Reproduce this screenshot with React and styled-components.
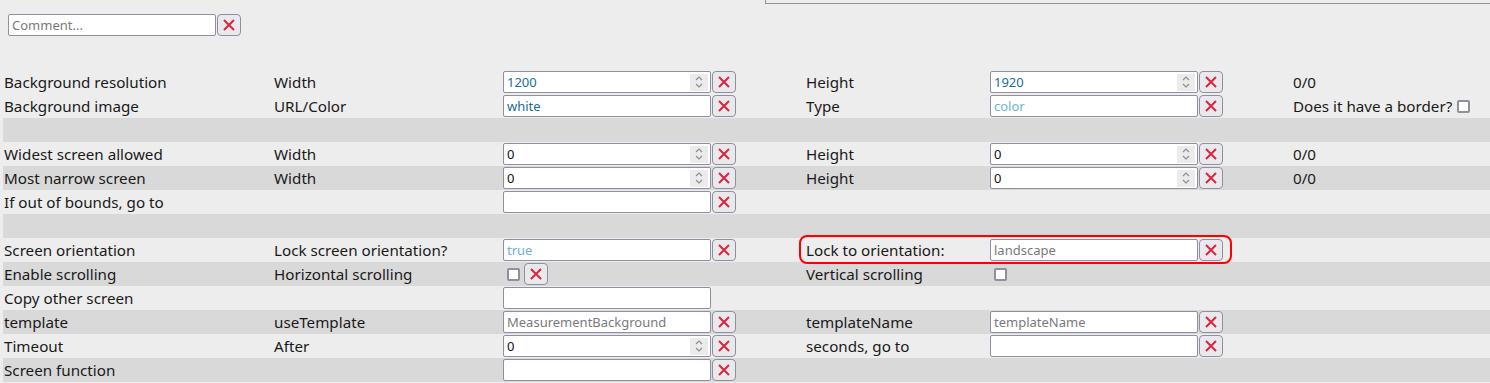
import React from "react"
import styled, { createGlobalStyle } from "styled-components"

const GlobalStyle = createGlobalStyle`
    html, body {
        margin: 0;
        padding: 0;
        background-color: #ededed;
        overflow: hidden;
    }
    body {
        font-family: "Noto Sans", "DejaVu Sans", sans-serif;
        color: #1a1a1a;
    }
`

const rows = [
    { label: "Background resolution", sub: "Width", a: { kind: "number", value: "1200", tone: "value" }, l2: "Height", b: { kind: "number", value: "1920", tone: "value" }, extra: "0/0" },
    { label: "Background image", sub: "URL/Color", a: { kind: "text", value: "white", tone: "value" }, l2: "Type", b: { kind: "text", placeholder: "color", tone: "hint" }, extra: "Does it have a border?", extraCheck: true },
    { empty: true, shade: true },
    { label: "Widest screen allowed", sub: "Width", a: { kind: "number", value: "0" }, l2: "Height", b: { kind: "number", value: "0" }, extra: "0/0" },
    { label: "Most narrow screen", sub: "Width", a: { kind: "number", value: "0" }, l2: "Height", b: { kind: "number", value: "0" }, extra: "0/0", shade: true },
    { label: "If out of bounds, go to", a: { kind: "text", value: "" } },
    { empty: true, shade: true },
    { label: "Screen orientation", sub: "Lock screen orientation?", a: { kind: "text", placeholder: "true", tone: "hint" }, l2: "Lock to orientation:", b: { kind: "text", placeholder: "landscape" }, highlight: true },
    { label: "Enable scrolling", sub: "Horizontal scrolling", a: { kind: "check" }, l2: "Vertical scrolling", b: { kind: "check", noClear: true }, shade: true },
    { label: "Copy other screen", a: { kind: "text", value: "", noClear: true } },
    { label: "template", sub: "useTemplate", a: { kind: "text", placeholder: "MeasurementBackground" }, l2: "templateName", b: { kind: "text", placeholder: "templateName" }, shade: true },
    { label: "Timeout", sub: "After", a: { kind: "number", value: "0" }, l2: "seconds, go to", b: { kind: "text", value: "" } },
    { label: "Screen function", a: { kind: "text", value: "" }, shade: true },
]

function ClearIcon() {
    return (
        <svg width="14" height="14" viewBox="0 0 14 14">
            <path d="M2 2 L12 12 M12 2 L2 12" stroke="#e0233d" strokeWidth="2" fill="none" />
        </svg>
    )
}

function SpinIcon() {
    return (
        <svg width="10" height="14" viewBox="0 0 10 14">
            <path d="M2 5 L5 2 L8 5 M2 9 L5 12 L8 9" stroke="#8c8c8c" strokeWidth="1.1" fill="none" />
        </svg>
    )
}

function Control({ field }) {
    if (!field) return null
    if (field.kind === "check") {
        return (
            <Group>
                <CheckBox />
                {!field.noClear && <ClearButton><ClearIcon /></ClearButton>}
            </Group>
        )
    }
    return (
        <Group>
            <Field>
                <Input tone={field.tone} defaultValue={field.value} placeholder={field.placeholder} />
                {field.kind === "number" && <Spinner><SpinIcon /></Spinner>}
            </Field>
            {!field.noClear && <ClearButton><ClearIcon /></ClearButton>}
        </Group>
    )
}

function App() {
    return (
        <Page>
            <GlobalStyle />
            <TopPreview />
            <CommentRow>
                <Field>
                    <Input placeholder="Comment..." />
                </Field>
                <ClearButton><ClearIcon /></ClearButton>
            </CommentRow>
            <Table>
                {rows.map((row, i) => (
                    <Row key={i} shade={row.shade}>
                        {!row.empty && (
                            <>
                                <Cell>{row.label}</Cell>
                                <Cell>{row.sub}</Cell>
                                <Cell><Control field={row.a} /></Cell>
                                {row.highlight ? (
                                    <Highlight>
                                        <Cell>{row.l2}</Cell>
                                        <Cell><Control field={row.b} /></Cell>
                                    </Highlight>
                                ) : (
                                    <>
                                        <Cell>{row.l2}</Cell>
                                        <Cell><Control field={row.b} /></Cell>
                                    </>
                                )}
                                <Cell>
                                    {row.extra}
                                    {row.extraCheck && <CheckBox style={{ marginLeft: 5 }} />}
                                </Cell>
                            </>
                        )}
                    </Row>
                ))}
            </Table>
        </Page>
    )
} export default App

const Page = styled.div`
    width: 1490px;
    height: 383px;
    overflow: hidden;
`

const TopPreview = styled.div`
    margin-left: 765px;
    width: 800px;
    height: 3px;
    border-left: 1px solid #8f8f9d;
    border-bottom: 1px solid #8f8f9d;
`

const CommentRow = styled.div`
    display: flex;
    align-items: center;
    margin-top: 10px;
    margin-left: 8px;
    height: 22px;
`

const Table = styled.div`
    margin-top: 34px;
    margin-left: 3px;
`

const Row = styled.div`
    display: grid;
    grid-template-columns: 270px 229px 303px 184px 303px 1fr;
    height: 24px;
    align-items: center;
    background-color: ${(p) => (p.shade ? "#d9d9d9" : "#ededed")};
    font-size: 15.2px;
    line-height: 24px;
`

const Cell = styled.div`
    display: flex;
    align-items: center;
    padding-left: 1px;
    white-space: nowrap;
    height: 24px;
`

const Highlight = styled.div`
    grid-column: span 2;
    display: grid;
    grid-template-columns: 184px 233px;
    margin: -3px 0 -2px -6px;
    padding: 1px 0 1px 4px;
    width: 425px;
    height: 23px;
    border: 2px solid #ff0000;
    border-radius: 8px;
    align-items: center;
`

const Group = styled.div`
    display: flex;
    align-items: center;
`

const Field = styled.div`
    display: flex;
    align-items: center;
    box-sizing: border-box;
    width: 208px;
    height: 22px;
    background-color: #ffffff;
    border: 1px solid #8f8f9d;
    border-radius: 2px;
    padding: 0 2px 0 3px;
`

const Input = styled.input`
    flex: 1;
    min-width: 0;
    border: none;
    outline: none;
    background: transparent;
    padding: 0;
    font-family: "Noto Sans", "DejaVu Sans", sans-serif;
    font-size: 13px;
    color: ${(p) => (p.tone === "value" ? "#176e9c" : "#111111")};

    &::placeholder {
        color: ${(p) => (p.tone === "hint" ? "#6eb2cd" : "#7a7a7a")};
        opacity: 1;
    }
`

const Spinner = styled.span`
    display: flex;
    align-items: center;
    justify-content: center;
    width: 18px;
    height: 17px;
    background-color: #ebebeb;
`

const ClearButton = styled.button`
    display: flex;
    align-items: center;
    justify-content: center;
    box-sizing: border-box;
    width: 24px;
    height: 22px;
    margin-left: 1px;
    padding: 0;
    background-color: #e9e9ed;
    border: 1px solid #8f8f9d;
    border-radius: 4px;
`

const CheckBox = styled.span`
    display: inline-block;
    box-sizing: border-box;
    width: 13px;
    height: 13px;
    margin: 0 3px 0 4px;
    background-color: #ffffff;
    border: 2px solid #8f8f9d;
    border-radius: 2px;
`
